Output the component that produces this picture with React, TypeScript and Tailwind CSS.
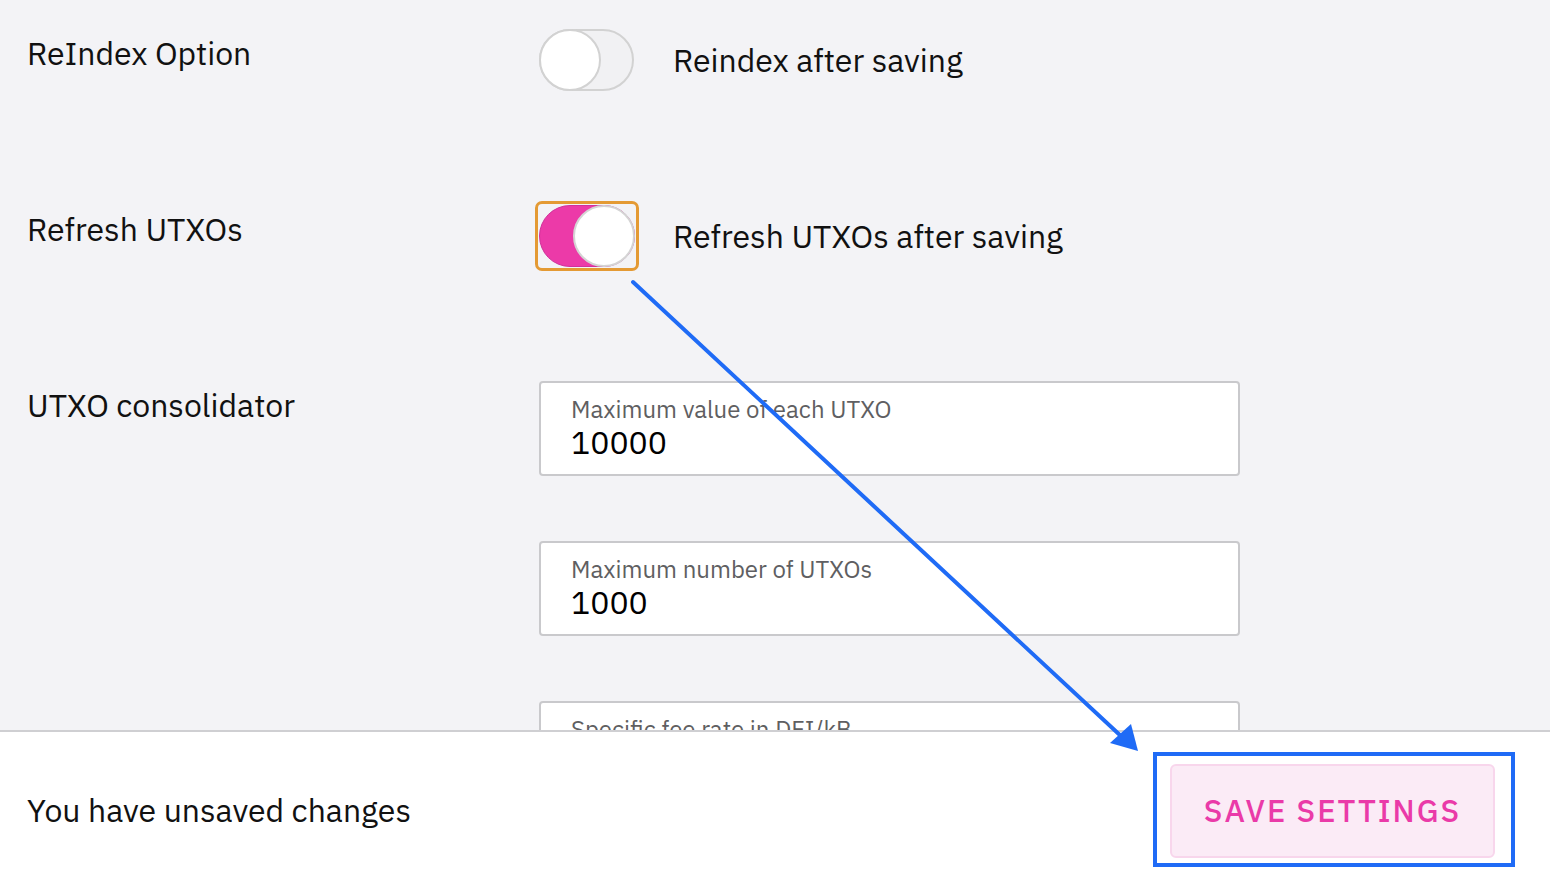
import React from "react";

const font = { fontFamily: '"IBM Plex Sans", Roboto, "Noto Sans", sans-serif' };

function Toggle({ on }: { on: boolean }) {
  if (on) {
    return (
      <div className="rounded-[7px] border-[3px] border-[#e49a34] p-px -m-[4px]">
        <div className="relative h-[62px] w-[96px] rounded-full bg-[#ec3aa8] border border-[#d0329a]">
          <div className="absolute right-[-1px] top-[-1px] h-[62px] w-[62px] rounded-full bg-white border-2 border-[#d4d4d4]" />
        </div>
      </div>
    );
  }
  return (
    <div className="relative h-[62px] w-[95px] rounded-full bg-[#f1f1f3] border-2 border-[#d2d2d2]">
      <div className="absolute left-[-2px] top-[-2px] h-[62px] w-[62px] rounded-full bg-white border-2 border-[#d2d2d2]" />
    </div>
  );
}

function Field({ label, value }: { label: string; value: string }) {
  return (
    <div className="h-[95px] w-[701px] shrink-0 rounded-[4px] border-2 border-[#c9c9cc] bg-white pl-[30px] pt-[11px]">
      <div className="text-[24px] leading-[30px] text-[#5f5f62]">{label}</div>
      <div className="text-[32px] leading-[36px] text-black">{value}</div>
    </div>
  );
}

export default function App() {
  return (
    <div className="relative h-[872px] w-[1550px] overflow-hidden bg-white text-[#111]" style={font}>
      <div className="h-[730px] overflow-hidden bg-[#f3f3f6] pl-[27px] pt-[29px]">
        {/* ReIndex */}
        <div className="flex items-start">
          <div className="w-[512px] pt-[5px] text-[32px] leading-[38px]">ReIndex Option</div>
          <div className="flex items-center gap-[39px]">
            <Toggle on={false} />
            <span className="text-[32px] leading-[38px]">Reindex after saving</span>
          </div>
        </div>
        {/* Refresh UTXOs */}
        <div className="mt-[114px] flex items-start">
          <div className="w-[512px] pt-[5px] text-[32px] leading-[38px]">Refresh UTXOs</div>
          <div className="flex items-center gap-[38px]">
            <Toggle on />
            <span className="text-[32px] leading-[38px]">Refresh UTXOs after saving</span>
          </div>
        </div>
        {/* Consolidator */}
        <div className="mt-[114px] flex items-start">
          <div className="w-[512px] pt-[5px] text-[32px] leading-[38px]">UTXO consolidator</div>
          <div className="flex flex-col gap-[65px]">
            <Field label="Maximum value of each UTXO" value="10000" />
            <Field label="Maximum number of UTXOs" value="1000" />
            <Field label="Specific fee rate in DFI/kB" value="" />
          </div>
        </div>
      </div>

      <div className="flex h-[160px] items-start justify-between border-t-2 border-[#cfcfd2] bg-white pl-[27px] pr-[55px] pt-[32px]">
        <span className="mt-[27px] text-[32px] leading-[38px]">You have unsaved changes</span>
        <button className="h-[94px] w-[325px] rounded-[6px] border-2 border-[#f8d6ec] bg-[#fbebf6] text-[31px] font-medium tracking-[2px] text-[#ea3aa8]">
          SAVE SETTINGS
        </button>
      </div>

      <svg className="pointer-events-none absolute left-0 top-0" width="1550" height="872" viewBox="0 0 1550 872">
        <line x1="633" y1="282" x2="1122" y2="737" stroke="#1f6bf6" strokeWidth="4" strokeLinecap="round" />
        <polygon points="1138,751 1110,743 1131,724" fill="#1f6bf6" />
        <rect x="1155" y="754" width="358" height="111" fill="none" stroke="#1f6bf6" strokeWidth="4" />
      </svg>
    </div>
  );
}
